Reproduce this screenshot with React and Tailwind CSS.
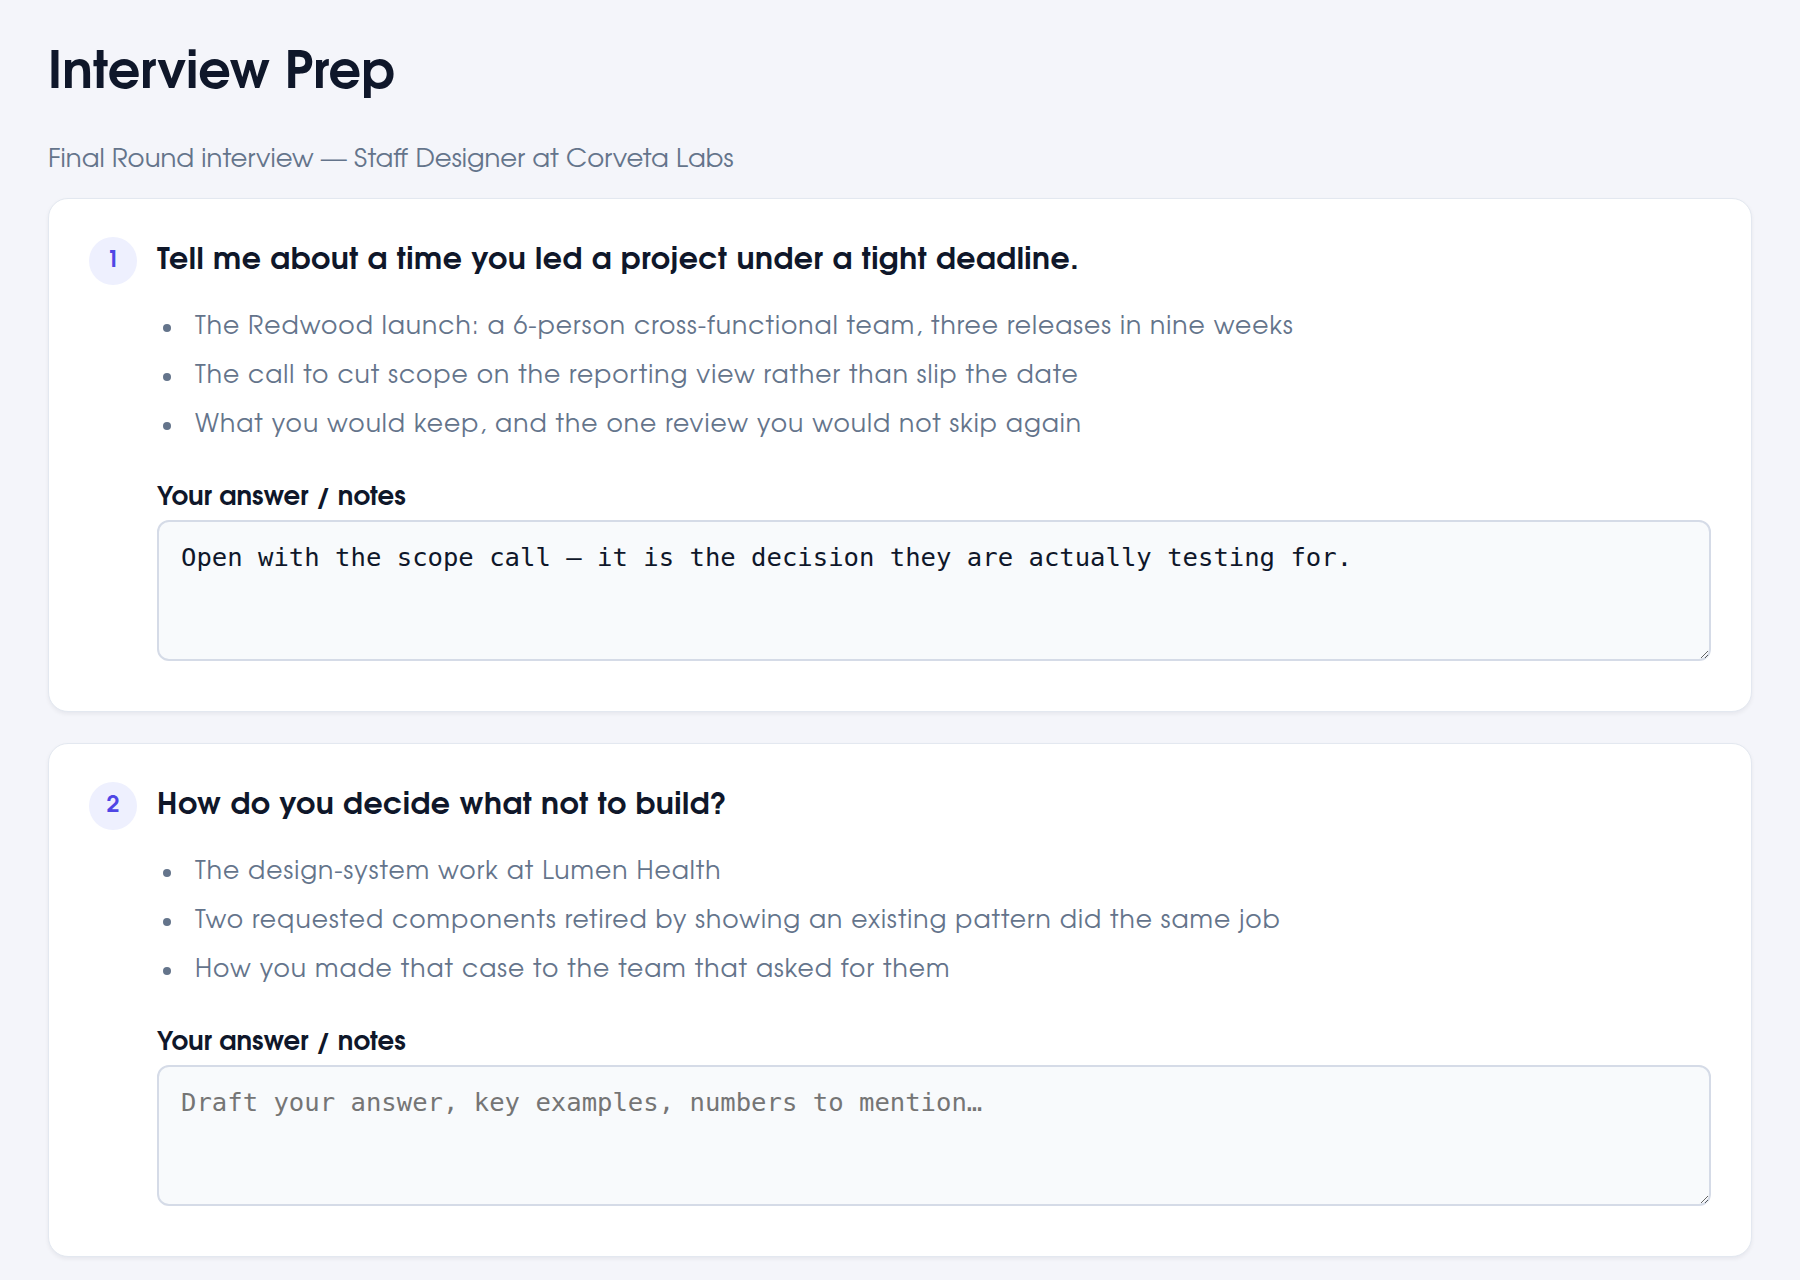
import React, { useState } from "react";

const gothic = {
  fontFamily: '"URW Gothic", "URW Gothic L", "Century Gothic", "TeX Gyre Adventor", "Avant Garde", "Lato", sans-serif',
};

const questions = [
  {
    id: 1,
    title: "Tell me about a time you led a project under a tight deadline.",
    points: [
      "The Redwood launch: a 6-person cross-functional team, three releases in nine weeks",
      "The call to cut scope on the reporting view rather than slip the date",
      "What you would keep, and the one review you would not skip again",
    ],
    answer: "Open with the scope call — it is the decision they are actually testing for.",
  },
  {
    id: 2,
    title: "How do you decide what not to build?",
    points: [
      "The design-system work at Lumen Health",
      "Two requested components retired by showing an existing pattern did the same job",
      "How you made that case to the team that asked for them",
    ],
    answer: "",
  },
];

const QuestionCard = ({ q }) => {
  const [notes, setNotes] = useState(q.answer);

  return (
    <div className="rounded-[20px] border border-[#e3e8f0] bg-white px-10 pt-[38px] pb-[50px] shadow-[0_2px_4px_rgba(15,23,42,0.06)]">
      <div className="flex items-start gap-5">
        <div className="flex h-12 w-12 shrink-0 items-center justify-center rounded-full bg-[#eef0fe] text-[23px] font-semibold text-[#4f46e5]">
          {q.id}
        </div>
        <div className="flex-1">
          <h2 className="pt-[4px] text-[30px] font-bold leading-[40px] tracking-[0.5px] text-[#0f172a]">
            {q.title}
          </h2>
          <ul className="mt-[29px] flex flex-col gap-[13px]">
            {q.points.map((p) => (
              <li key={p} className="flex items-center text-[25px] leading-[36px] tracking-[1px] text-[#64748b]">
                <span className="mr-[24px] ml-[6px] h-[8px] w-[8px] shrink-0 rounded-full bg-[#64748b]" />
                {p}
              </li>
            ))}
          </ul>
          <label className="mt-[38px] block text-[26px] font-bold leading-[32px] text-[#0f172a]">
            Your answer / notes
          </label>
          <textarea
            value={notes}
            onChange={(e) => setNotes(e.target.value)}
            placeholder="Draft your answer, key examples, numbers to mention…"
            className="mt-[6px] block h-[141px] w-full rounded-[12px] border-2 border-[#d5dbe7] bg-[#f8fafc] px-[22px] pt-[17px] pb-[12px] text-[25.6px] leading-[36px] text-[#0f172a] placeholder:text-[#757575]"
            style={{ fontFamily: '"DejaVu Sans Mono", monospace' }}
          />
        </div>
      </div>
    </div>
  );
};

export default function App() {
  return (
    <div className="min-h-screen bg-[#f4f5fa] px-12 pt-[42px] pb-12" style={gothic}>
      <h1 className="text-[51px] font-bold leading-[64px] text-[#0f172a]">Interview Prep</h1>
      <p className="mt-[38px] text-[26px] leading-[32px] text-[#64748b]">
        Final Round interview — Staff Designer at Corveta Labs
      </p>
      <div className="mt-[22px] flex flex-col gap-[31px]">
        {questions.map((q) => (
          <QuestionCard key={q.id} q={q} />
        ))}
      </div>
    </div>
  );
}
